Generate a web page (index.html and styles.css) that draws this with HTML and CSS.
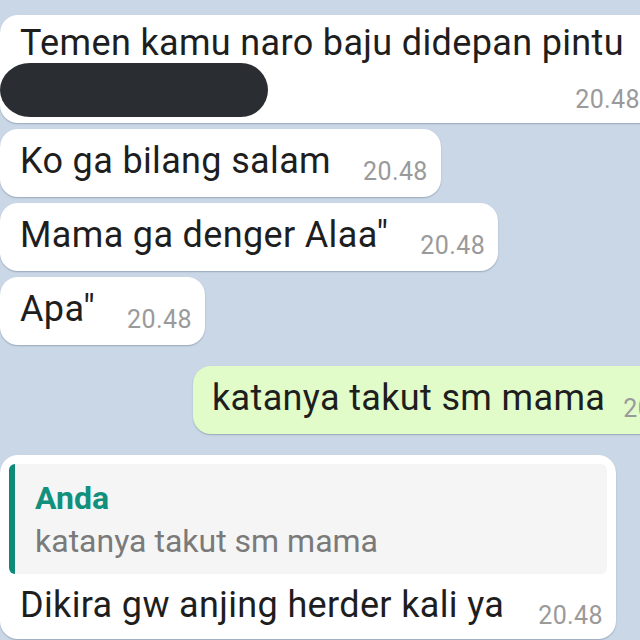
FILE: index.html
```html
<!DOCTYPE html>
<html>
<head>
<meta charset="utf-8">
<link rel="stylesheet" href="styles.css">
</head>
<body>
<div class="chat">
  <div class="bubble in first">
    <div class="text">Temen kamu naro baju didepan pintu</div>
    <div class="row">
      <div class="redact"></div>
      <span class="time">20.48</span>
    </div>
  </div>
  <div class="bubble in"><span class="text">Ko ga bilang salam</span><span class="time">20.48</span></div>
  <div class="bubble in"><span class="text">Mama ga denger Alaa"</span><span class="time">20.48</span></div>
  <div class="bubble in"><span class="text">Apa"</span><span class="time">20.48</span></div>
  <div class="bubble out"><span class="text">katanya takut sm mama</span><span class="time">20.48</span></div>
  <div class="bubble in reply">
    <div class="quote">
      <div class="q-name">Anda</div>
      <div class="q-text">katanya takut sm mama</div>
    </div>
    <div class="line"><span class="text">Dikira gw anjing herder kali ya</span><span class="time">20.48</span></div>
  </div>
</div>
</body>
</html>
```

FILE: styles.css
```css
html, body {
  margin: 0;
  padding: 0;
}
body {
  width: 640px;
  height: 640px;
  overflow: hidden;
  background: #c9d7e7;
  font-family: Roboto, "Noto Sans", sans-serif;
}
.chat {
  display: flex;
  flex-direction: column;
  align-items: flex-start;
  padding-top: 15px;
}
.bubble {
  background: #ffffff;
  border-radius: 18px;
  box-shadow: 0 1px 1.5px rgba(40, 60, 80, 0.3);
  display: flex;
  align-items: flex-end;
  gap: 32px;
  height: 68px;
  padding: 11px 13px 15px 20px;
  flex-shrink: 0;
  white-space: nowrap;
  box-sizing: border-box;
}
.text {
  font-size: 36px;
  line-height: 42px;
  letter-spacing: 0.35px;
  color: #1e1e1e;
}
.time {
  font-size: 25px;
  line-height: 16px;
  letter-spacing: 0.4px;
  color: #9a9a9a;
  margin-bottom: 2px;
}
.bubble + .bubble {
  margin-top: 6px;
}
.first {
  display: block;
  width: 660px;
  height: 108px;
  padding: 7px 20px 5px 20px;
}
.row {
  display: flex;
  justify-content: space-between;
  align-items: flex-end;
  margin-top: -1px;
}
.redact {
  width: 268px;
  height: 54px;
  margin-left: -20px;
  background: #2a2d31;
  border-radius: 30px 27px 27px 30px / 27px 27px 27px 27px;
}
.first .time {
  margin-bottom: 9px;
}
.bubble.out {
  margin-top: 21px;
  margin-left: 193px;
  background: #e1fcc9;
  padding-left: 19px;
  gap: 18px;
  width: 520px;
}
.bubble.reply {
  margin-top: 21px;
  display: block;
  width: 616px;
  height: 184px;
  padding: 9px 9px 13px 9px;
}
.quote {
  background: #f5f5f5;
  border-left: 6px solid #0f8a79;
  border-radius: 6px;
  height: 110px;
  box-sizing: border-box;
  padding: 15px 0 0 20px;
}
.q-name {
  font-size: 32px;
  line-height: 38px;
  font-weight: 700;
  color: #11907e;
}
.q-text {
  margin-top: 5px;
  font-size: 32px;
  line-height: 38px;
  color: #7a7a7a;
}
.line {
  display: flex;
  justify-content: space-between;
  align-items: flex-end;
  margin-top: 10px;
  padding: 0 4px 0 11px;
}
```
